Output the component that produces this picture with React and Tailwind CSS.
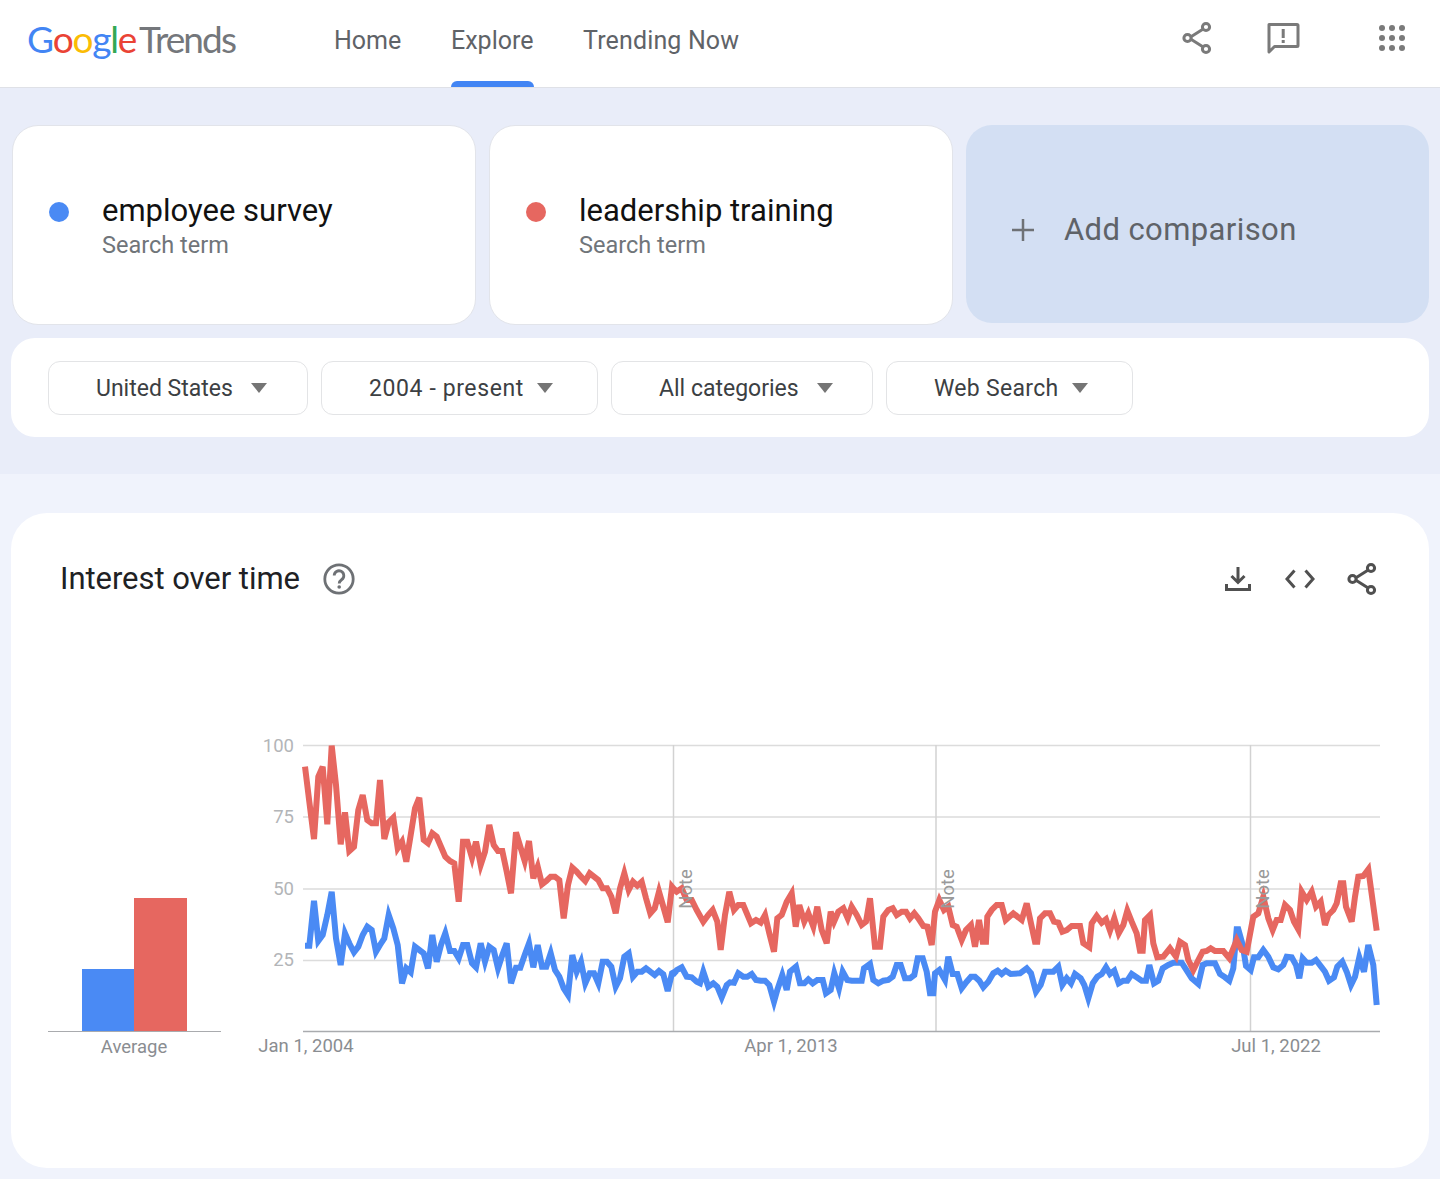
import React from 'react';

// chart traces, read off three crops of the graph (x0, y0 = crop origin, values are at 3x)
const toPoints = (x0, y0, list) => list.map(([x, y]) => `${(x0 + x / 3).toFixed(1)},${(y0 + y / 3).toFixed(1)}`);

const redA = [[45,95],[58,200],[72,312],[85,125],[98,95],[112,268],[125,32],[138,150],[152,328],[165,232],[178,348],[192,335],[205,225],[218,180],[232,255],[245,265],[258,265],[270,135],[283,312],[296,262],[310,248],[323,340],[336,320],[349,380],[362,300],[375,220],[388,188],[401,315],[414,325],[427,295],[440,305],[453,335],[466,365],[480,378],[493,385],[506,500],[519,320],[532,320],[546,368],[558,320],[572,390],[585,350],[598,270],[611,330],[624,348],[637,348],[650,410],[663,475],[678,292],[691,335],[704,378],[717,318],[730,430],[743,395],[756,448],[769,438],[782,425],[795,425],[808,435],[821,550],[834,450],[847,398],[860,410],[873,425],[886,438],[899,415],[912,425],[925,435],[938,460],[951,460],[964,485],[977,535],[990,460],[1003,415],[1016,465],[1029,440],[1042,452],[1055,440],[1068,490],[1081,535],[1094,520],[1107,470],[1120,515],[1133,562],[1146,455],[1159,470]];
const redB = [[5,110],[20,125],[35,115],[50,150],[65,150],[80,180],[100,215],[115,195],[128,180],[142,215],[152,300],[165,195],[178,125],[192,180],[205,165],[220,165],[243,220],[258,210],[272,218],[285,195],[298,250],[312,305],[322,205],[335,195],[350,155],[365,130],[377,230],[388,165],[403,215],[415,190],[430,230],[442,170],[455,240],[470,280],[482,185],[492,215],[505,185],[520,175],[533,205],[545,170],[560,195],[575,225],[588,215],[600,145],[615,290],[630,290],[640,200],[655,180],[668,175],[680,195],[695,185],[708,185],[720,205],[733,190],[745,205],[760,228],[772,230],[785,285],[795,185],[808,150],[822,180],[835,170],[848,225],[860,230],[875,270],[888,240],[903,225],[915,290],[927,210],[938,275],[948,275],[952,200],[965,180],[980,165],[995,165],[1007,210],[1030,190]];
const redC = [[5,210],[20,160],[33,220],[45,275],[52,275],[60,205],[75,190],[90,190],[102,215],[115,218],[127,245],[140,240],[155,228],[180,228],[190,280],[208,292],[215,220],[230,198],[245,218],[258,208],[270,242],[283,205],[296,250],[310,225],[322,182],[335,215],[350,250],[360,302],[368,302],[375,210],[390,195],[400,280],[412,322],[430,320],[450,295],[468,320],[480,275],[495,285],[505,330],[520,360],[535,330],[548,305],[560,303],[572,295],[585,303],[610,303],[628,325],[650,270],[665,300],[680,305],[700,200],[715,190],[730,140],[745,205],[758,240],[770,210],[782,210],[795,165],[810,180],[822,215],[835,238],[845,125],[860,150],[875,125],[888,170],[902,155],[915,225],[925,195],[940,180],[950,160],[962,100],[970,100],[978,170],[995,215],[1005,140],[1015,80],[1030,78],[1045,58],[1070,242]];

const blueA = [[45,632],[58,632],[72,497],[85,618],[98,600],[112,540],[125,470],[138,610],[152,690],[165,595],[178,625],[192,652],[205,635],[218,600],[232,575],[245,585],[258,650],[270,630],[283,610],[296,540],[310,580],[323,630],[336,745],[349,700],[362,712],[375,635],[388,645],[401,655],[414,700],[427,600],[440,680],[453,630],[466,595],[480,648],[493,648],[506,670],[519,630],[532,630],[546,685],[558,697],[572,625],[585,680],[598,635],[611,645],[624,700],[637,660],[650,625],[663,745],[678,698],[691,698],[704,660],[717,625],[730,697],[743,630],[756,695],[769,695],[782,655],[795,705],[808,725],[821,760],[834,780],[847,660],[860,710],[873,680],[886,745],[899,715],[912,715],[925,745],[938,680],[951,680],[964,695],[977,755],[990,730],[1003,665],[1016,655],[1029,725],[1042,710],[1055,710],[1068,700],[1081,710],[1094,720],[1107,708],[1120,718],[1133,768],[1146,715],[1159,708]];
const blueB = [[8,375],[20,360],[35,352],[50,380],[65,382],[80,395],[90,400],[100,365],[115,410],[130,400],[142,410],[155,442],[170,405],[180,397],[192,398],[205,370],[220,380],[232,380],[245,372],[258,390],[272,392],[285,392],[298,405],[312,455],[322,420],[337,375],[350,420],[360,365],[378,350],[390,400],[403,400],[415,388],[428,400],[442,390],[458,390],[468,430],[482,420],[493,370],[507,415],[518,365],[532,390],[545,392],[560,392],[575,392],[582,355],[600,342],[610,390],[625,400],[640,392],[655,390],[668,380],[680,345],[692,345],[705,385],[720,385],[733,375],[743,325],[758,325],[770,365],[780,430],[790,430],[795,370],[808,360],[825,390],[835,320],[848,372],[862,372],[875,415],[890,395],[903,380],[915,380],[928,392],[940,412],[955,395],[970,370],[983,362],[995,372],[1007,362],[1022,372]];
const blueC = [[0,370],[20,355],[33,370],[48,425],[62,405],[75,365],[100,365],[115,350],[127,405],[140,385],[153,400],[165,372],[182,385],[193,405],[205,445],[218,400],[232,380],[245,372],[258,352],[270,372],[283,362],[296,400],[310,392],[322,392],[335,372],[350,382],[365,392],[378,392],[388,345],[402,400],[415,392],[428,355],[445,345],[460,338],[485,338],[498,358],[515,385],[535,402],[548,345],[560,340],[585,340],[600,372],[615,382],[628,392],[640,355],[650,238],[655,238],[668,285],[678,348],[692,360],[702,322],[715,322],[730,300],[745,320],[760,352],[775,358],[790,345],[800,320],[815,322],[828,345],[838,385],[848,325],[860,338],[875,338],[888,330],[905,352],[915,365],[927,392],[942,382],[952,350],[967,335],[980,365],[993,405],[1005,380],[1018,322],[1032,365],[1045,285],[1060,345],[1070,465]];

const redLine = [...toPoints(290, 735, redA), ...toPoints(670, 850, redB), ...toPoints(1020, 850, redC)].join(' ');
const blueLine = [...toPoints(290, 735, blueA), ...toPoints(670, 850, blueB), ...toPoints(1020, 850, blueC)].join(' ');

const font = { fontFamily: 'Roboto, sans-serif' };

function ShareIcon({ className, color }) {
  return (
    <svg className={className} viewBox="0 0 30 34" fill="none" stroke={color} strokeWidth="3">
      <path d="M7 17 L22 7.5 M7 17 L22 26.5" />
      <circle cx="5.5" cy="17" r="3.6" fill="#fff" />
      <circle cx="24" cy="6" r="3.6" fill="#fff" />
      <circle cx="24" cy="28" r="3.6" fill="#fff" />
    </svg>
  );
}

function FilterSelect({ label, className }) {
  return (
    <button className={`flex h-[54px] items-center rounded-xl border border-[#e3e4e6] bg-white pl-[47px] text-[23px] text-[#3c4043] ${className}`}>
      <span className="mt-[3px]">{label}</span>
      <svg className="h-[10px] w-[16px]" viewBox="0 0 16 10"><path d="M0 0h16L8 10z" fill="#757575" /></svg>
    </button>
  );
}

function TermCard({ term, dot, className }) {
  return (
    <div className={`flex h-[200px] items-start rounded-[26px] border border-[#e2e4ea] bg-white pl-[36px] pt-[67px] ${className}`}>
      <span className={`mt-[9px] h-[20px] w-[20px] rounded-full ${dot}`} />
      <div className="ml-[33px]">
        <div className="text-[31px] leading-[36px] text-[#111]">{term}</div>
        <div className="mt-[2px] text-[23.5px] leading-[28px] text-[#70757a]">Search term</div>
      </div>
    </div>
  );
}

export default function App() {
  return (
    <div className="min-h-screen w-full bg-[#f0f3fc]" style={font}>
      {/* Top bar */}
      <header className="flex h-[88px] items-center border-b border-[#dfe1e7] bg-white pl-[27px]">
        <div className="mb-[10px] flex w-[307px] items-baseline text-[37px] leading-none tracking-[-1.25px]" style={{ fontFamily: 'Lato, sans-serif' }}>
          <span className="text-[#4285f4]">G</span>
          <span className="text-[#ea4335]">o</span>
          <span className="text-[#fbbc05]">o</span>
          <span className="text-[#4285f4]">g</span>
          <span className="text-[#34a853]">l</span>
          <span className="text-[#ea4335]">e</span>
          <span className="ml-[3px] tracking-[-1.9px] text-[#74777b]">Trends</span>
        </div>
        <nav className="mb-[6px] flex items-center text-[25px] text-[#5f6368]">
          <a className="w-[117px]">Home</a>
          <a className="relative w-[132px]">
            Explore
            <span className="absolute bottom-[-28px] left-0 h-[6px] w-[83px] rounded-t-md bg-[#4285f4]" />
          </a>
          <a className="tracking-[0.15px]">Trending Now</a>
        </nav>
        <div className="mb-[12px] ml-auto flex items-center pr-[34px]">
          <ShareIcon className="h-[34px] w-[30px]" color="#7a7a7a" />
          <svg className="ml-[54px] h-[34px] w-[34px]" viewBox="0 0 34 34" fill="none">
            <path d="M3 3.5h28a1 1 0 0 1 1 1v20a1 1 0 0 1-1 1H8.5L3 31z" stroke="#7a7a7a" strokeWidth="3" strokeLinejoin="round" />
            <path d="M15.7 9h3v9h-3zM15.7 20h3v3h-3z" fill="#7a7a7a" transform="translate(0 -1)" />
          </svg>
          <svg className="ml-[78px] h-[28px] w-[28px]" viewBox="0 0 28 28" fill="#7a7a7a">
            <circle cx="4" cy="4" r="3" /><circle cx="14" cy="4" r="3" /><circle cx="24" cy="4" r="3" />
            <circle cx="4" cy="14" r="3" /><circle cx="14" cy="14" r="3" /><circle cx="24" cy="14" r="3" />
            <circle cx="4" cy="24" r="3" /><circle cx="14" cy="24" r="3" /><circle cx="24" cy="24" r="3" />
          </svg>
        </div>
      </header>

      {/* Search terms and filters */}
      <section className="bg-[#e9edf9] px-[11px] pb-[37px] pt-[37px]">
        <div className="flex items-start">
          <TermCard term="employee survey" dot="bg-[#4a8af4]" className="ml-[1px] w-[464px]" />
          <TermCard term="leadership training" dot="bg-[#e66760]" className="ml-[13px] w-[464px]" />
          <div className="ml-[13px] flex h-[198px] w-[463px] items-center rounded-[26px] bg-[#d3dff3] pl-[45px] pt-[12px] text-[31px] tracking-[0.4px] text-[#5f6368]">
            <svg className="h-[24px] w-[24px]" viewBox="0 0 24 24" stroke="#6e7175" strokeWidth="2.5"><path d="M12 1v22M1 12h22" /></svg>
            <span className="ml-[29px]">Add comparison</span>
          </div>
        </div>
        <div className="mt-[13px] flex h-[99px] items-center rounded-[24px] bg-white pl-[37px]">
          <FilterSelect label="United States" className="w-[260px] gap-[18px]" />
          <FilterSelect label="2004 - present" className="ml-[13px] w-[277px] gap-[13px] tracking-[0.6px]" />
          <FilterSelect label="All categories" className="ml-[13px] w-[262px] gap-[18px]" />
          <FilterSelect label="Web Search" className="ml-[13px] w-[247px] gap-[13px] tracking-[0.3px]" />
        </div>
      </section>

      {/* Interest over time */}
      <section className="px-[11px] pb-[11px] pt-[39px]">
        <div className="h-[655px] rounded-[36px] bg-white">
          <div className="flex h-[132px] items-center pl-[49px] pr-[52px]">
            <h2 className="text-[31px] font-normal tracking-[-0.05px] text-[#202124]">Interest over time</h2>
            <svg className="ml-[23px] h-[32px] w-[32px]" viewBox="0 0 32 32" fill="none">
              <circle cx="16" cy="16" r="14.2" stroke="#6e7175" strokeWidth="2.8" />
              <path d="M11.2 12.6a4.8 4.8 0 1 1 7.6 3.9c-1.6 1.2-2.6 2-2.6 4" stroke="#6e7175" strokeWidth="2.8" />
              <circle cx="16.2" cy="24" r="1.8" fill="#6e7175" />
            </svg>
            <div className="ml-auto flex items-center">
              <svg className="h-[26px] w-[26px]" viewBox="0 0 26 26" fill="none" stroke="#505050" strokeWidth="3">
                <path d="M13 1v15M6.5 10l6.5 6.5 6.5-6.5M1.5 18v5.5h23V18" />
              </svg>
              <svg className="ml-[34px] h-[20px] w-[30px]" viewBox="0 0 30 20" fill="none" stroke="#505050" strokeWidth="3">
                <path d="M9.5 1.5L2 10l7.5 8.5M20.5 1.5L28 10l-7.5 8.5" />
              </svg>
              <ShareIcon className="ml-[32px] h-[34px] w-[30px]" color="#505050" />
            </div>
          </div>

          <div className="flex items-start pl-[37px]">
            {/* Average bars */}
            <div className="mt-[254px] w-[173px]">
              <div className="flex h-[133px] items-end border-b border-[#a9abae] pl-[34px]">
                <div className="h-[62px] w-[52px] bg-[#4a8af4]" />
                <div className="h-[133px] w-[53px] bg-[#e66760]" />
              </div>
              <div className="mt-[2px] pr-[1px] text-center text-[18.5px] leading-[26px] text-[#8a8d91]">Average</div>
            </div>

            {/* Line chart, viewBox is in page coordinates */}
            <svg className="ml-[37px] mt-[90px] shrink-0" width="1122" height="330" viewBox="258 735 1122 330" style={font}>
              <g stroke="#dcdcdc" strokeWidth="1.5">
                <path d="M303 745.5H1380M303 817H1380M303 889H1380M303 960.5H1380" />
                <path d="M673.5 745V1031M936 745V1031M1250.5 745V1031" stroke="#d2d2d2" />
              </g>
              <path d="M303 1031.5H1380" stroke="#a9abae" strokeWidth="1.5" />
              <clipPath id="plot"><rect x="296" y="745" width="1090" height="290" /></clipPath>
              <g clipPath="url(#plot)" fill="none" strokeWidth="6">
                <polyline points={blueLine} stroke="#4a8af4" />
                <polyline points={redLine} stroke="#e66760" />
              </g>
              <g fontSize="18.5" fill="#b3b5b8" textAnchor="end">
                <text x="294" y="752">100</text>
                <text x="294" y="823">75</text>
                <text x="294" y="895">50</text>
                <text x="294" y="966">25</text>
              </g>
              <g fontSize="18.5" fill="#8a8d91" textAnchor="middle">
                <text x="306" y="1052">Jan 1, 2004</text>
                <text x="791" y="1052">Apr 1, 2013</text>
                <text x="1276" y="1052">Jul 1, 2022</text>
              </g>
              <g fontSize="18.5" fill="#9a9a9a" textAnchor="middle">
                <text transform="translate(692 889) rotate(-90)">Note</text>
                <text transform="translate(954 889) rotate(-90)">Note</text>
                <text transform="translate(1269 889) rotate(-90)">Note</text>
              </g>
            </svg>
          </div>
        </div>
      </section>
    </div>
  );
}
